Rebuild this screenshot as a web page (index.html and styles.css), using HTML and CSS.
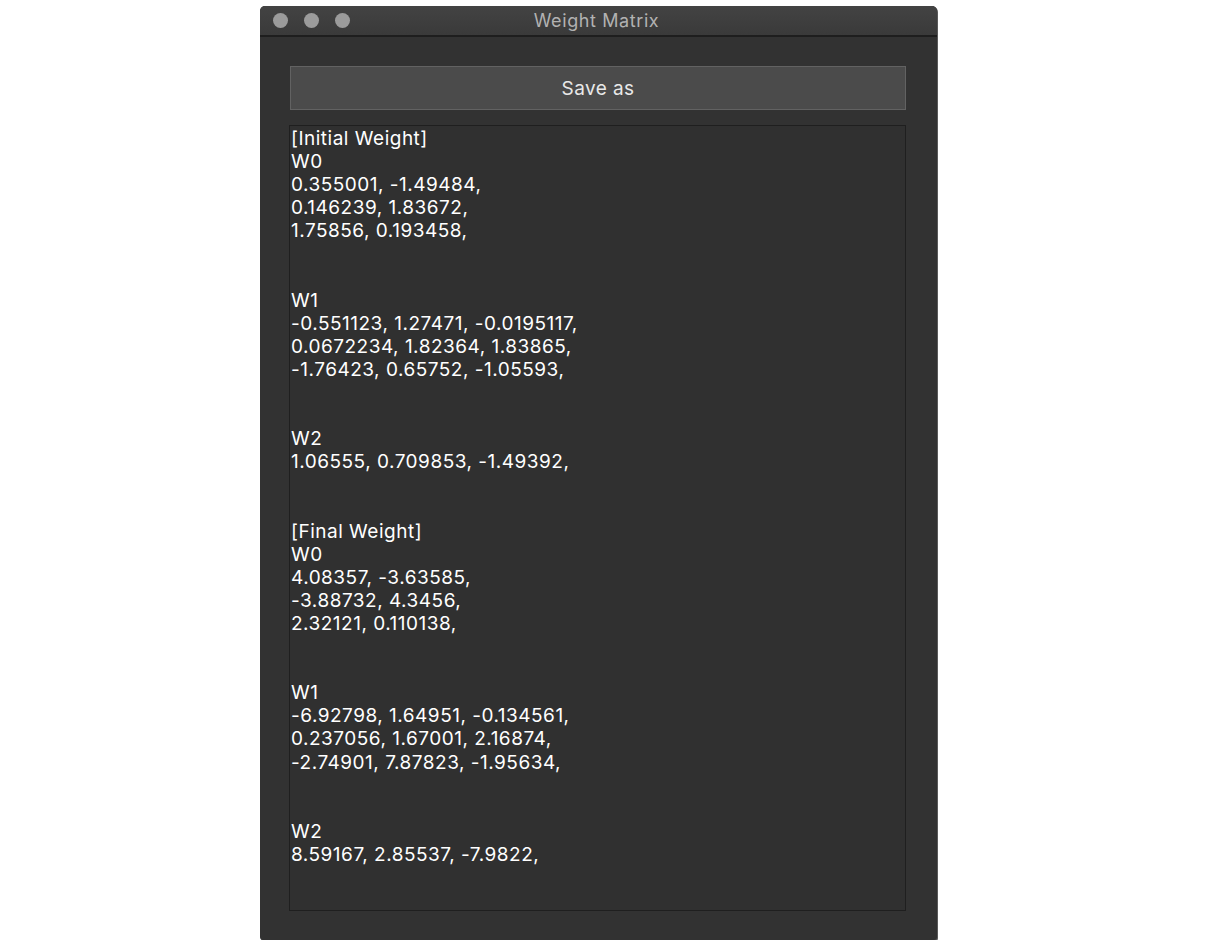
FILE: index.html
```html
<!DOCTYPE html>
<html>
<head>
<meta charset="utf-8">
<link rel="stylesheet" href="styles.css">
</head>
<body>
<div class="window">
  <div class="titlebar">
    <div class="lights"><span class="light"></span><span class="light"></span><span class="light"></span></div>
    <div class="title">Weight Matrix</div>
  </div>
  <div class="content">
    <button class="save">Save as</button>
    <div class="output">[Initial Weight]
W0
0.355001, -1.49484,
0.146239, 1.83672,
1.75856, 0.193458,


W1
-0.551123, 1.27471, -0.0195117,
0.0672234, 1.82364, 1.83865,
-1.76423, 0.65752, -1.05593,


W2
1.06555, 0.709853, -1.49392,


[Final Weight]
W0
4.08357, -3.63585,
-3.88732, 4.3456,
2.32121, 0.110138,


W1
-6.92798, 1.64951, -0.134561,
0.237056, 1.67001, 2.16874,
-2.74901, 7.87823, -1.95634,


W2
8.59167, 2.85537, -7.9822,
</div>
  </div>
</div>
</body>
</html>
```
FILE: styles.css
```css
html, body {
  margin: 0;
  padding: 0;
  background: #ffffff;
}
body {
  padding: 6px 0 0 260px;
  font-family: Inter, "Open Sans", sans-serif;
}
.window {
  width: 677px;
  height: 934px;
  background: #323232;
  border-radius: 5px 5px 3px 3px;
  box-shadow: 1px 1px 0 #5a5a5a;
  display: flex;
  flex-direction: column;
  overflow: hidden;
}
.titlebar {
  height: 29px;
  background: linear-gradient(#434343, #3a3a3a);
  border-bottom: 2px solid #1e1e1e;
  position: relative;
  display: flex;
  align-items: center;
  justify-content: center;
}
.lights {
  position: absolute;
  left: 13px;
  top: 7px;
  display: flex;
  gap: 16px;
}
.light {
  width: 15px;
  height: 15px;
  border-radius: 50%;
  background: #9b9b9b;
}
.title {
  color: #b2b2b2;
  font-size: 18px;
  letter-spacing: 0.6px;
  margin-left: -4px;
}
.content {
  padding: 29px 31px 29px 30px;
  display: flex;
  flex-direction: column;
  flex: 1;
  min-height: 0;
}
.save {
  height: 44px;
  width: 616px;
  background: #4b4b4b;
  border: 1px solid #626262;
  color: #e8e8e8;
  font-family: Inter, "Open Sans", sans-serif;
  font-size: 19px;
  letter-spacing: 0.4px;
  padding: 0;
  margin: 0;
}
.output {
  margin-top: 15px;
  margin-left: -1px;
  flex: 1;
  background: #303030;
  border: 1px solid #1f1f1f;
  color: #ffffff;
  font-size: 19px;
  letter-spacing: 0.5px;
  line-height: 23.1px;
  padding: 1px 1px;
  white-space: pre;
}
```
